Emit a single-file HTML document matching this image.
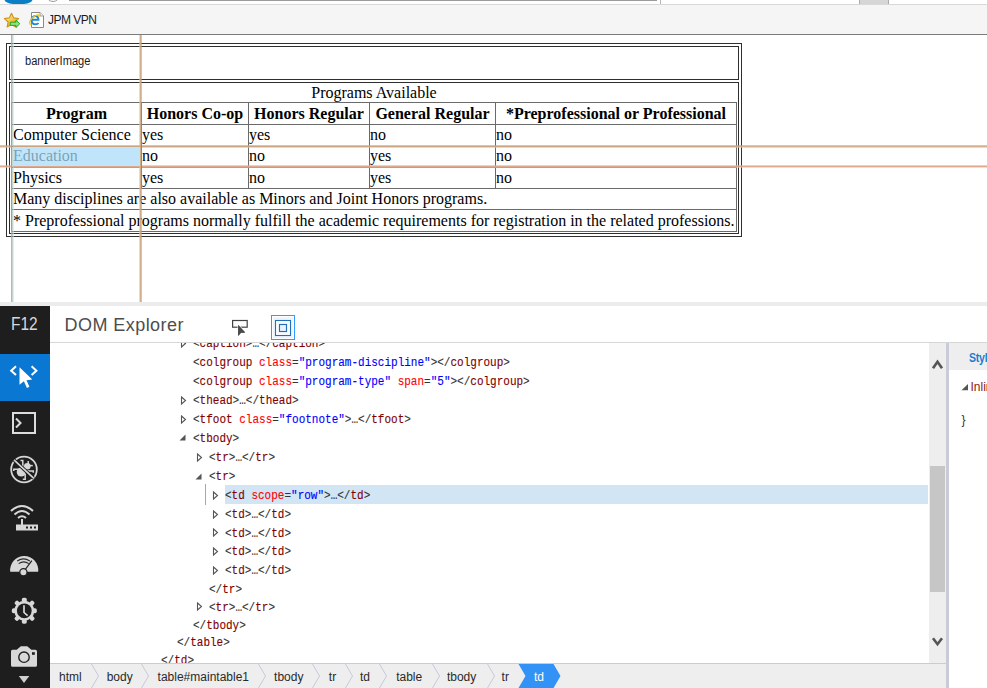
<!DOCTYPE html>
<html><head><meta charset="utf-8"><style>
html,body{margin:0;padding:0;}
body{width:987px;height:688px;position:relative;overflow:hidden;background:#fff;}
body>div,body>span,body>svg{position:absolute;}
.t{white-space:nowrap;}
</style></head><body>
<div style="left:0px;top:0px;width:987px;height:4px;background:#ffffff;"></div>
<div style="left:3.5px;top:-3px;width:29px;height:7px;border-radius:0 0 9px 9px / 0 0 6px 6px;background:#0a7fc6;"></div>
<div style="left:46px;top:-12px;width:12px;height:12px;border-radius:50%;border:1.5px solid #9a9a9a;background:#fff;"></div>
<div style="left:69px;top:0px;width:588px;height:1px;background:#9a9a9a;"></div>
<div style="left:660px;top:0px;width:1px;height:4px;background:#b8b8b8;"></div>
<div style="left:859px;top:0px;width:30px;height:4px;background:#d6d6d6;box-sizing:border-box;border-left:1px solid #aaa;border-right:1px solid #aaa;"></div>
<div style="left:0px;top:4px;width:987px;height:1px;background:#d8d8d8;"></div>
<div style="left:0px;top:5px;width:987px;height:29px;background:#f5f5f5;"></div>
<div style="left:0px;top:34px;width:987px;height:1px;background:#7c7c7c;"></div>
<svg style="left:3px;top:12px;" width="18" height="17" viewBox="0 0 18 17">
<defs><linearGradient id="sg" x1="0" y1="0" x2="0.6" y2="1"><stop offset="0" stop-color="#fff8d0"/><stop offset="0.45" stop-color="#fbd45a"/><stop offset="1" stop-color="#eb9512"/></linearGradient></defs>
<path d="M8.5 1.2 L10.6 5.8 L15.6 6.6 L11.9 10 L12.9 15 L8.5 12.6 L4.1 15 L5.1 10 L1.4 6.6 L6.4 5.8 Z" fill="url(#sg)" stroke="#c8951c" stroke-width="1.1" stroke-linejoin="round"/>
<path d="M7.3 10.2 H13 V8.2 L16.8 11.8 L13 15.4 V13.4 H7.3 Z" fill="#8fe37a" stroke="#24a824" stroke-width="1"/>
</svg>
<svg style="left:28px;top:11px;" width="18" height="18" viewBox="0 0 18 18">
<path d="M3.5 1.5 H12 L15.5 5 V16.5 H3.5 Z" fill="#fff" stroke="#8a8a8a" stroke-width="1"/>
<path d="M12 1.5 V5 H15.5" fill="#f0f0f0" stroke="#8a8a8a" stroke-width="0.8"/>
<path d="M3.9 8.7 H10.4 C10.4 6.2 9 4.9 7.3 4.9 C5.1 4.9 3.6 6.8 3.6 9.2 C3.6 11.8 5.4 13.3 7.5 13.3 C8.9 13.3 9.9 12.8 10.6 12.1" fill="none" stroke="#1f88d6" stroke-width="2"/>
<path d="M3.4 13.6 C1.2 13.4 0.9 11.2 3.2 8.2 C5.6 5.2 9.4 3.3 10.6 3.9 C11.3 4.3 11 5.4 10.6 6" fill="none" stroke="#f3c21c" stroke-width="1.3"/>
</svg>
<span class="t " style="left:48px;top:12.64px;font-family:'Liberation Sans', sans-serif;font-size:12px;line-height:14px;color:#1a1a1a;font-weight:normal;letter-spacing:-0.5px;">JPM VPN</span>
<div style="left:0px;top:35px;width:987px;height:267px;background:#ffffff;"></div>
<div style="left:6px;top:43px;width:736px;height:194px;box-sizing:border-box;border:1px solid #2e2e2e;"></div>
<div style="left:9px;top:46px;width:730px;height:34px;box-sizing:border-box;border:1px solid #2e2e2e;"></div>
<div style="left:9px;top:82px;width:730px;height:152px;box-sizing:border-box;border:1px solid #2e2e2e;"></div>
<span class="t " style="left:25.3px;top:53.84px;font-family:'Liberation Sans', sans-serif;font-size:12px;line-height:14px;color:#1a1a1a;font-weight:normal;transform:scaleX(0.925);transform-origin:0 0;">bannerImage</span>
<div style="left:11px;top:102px;width:726px;height:1px;background:#6a6a6a;"></div>
<div style="left:11px;top:124px;width:726px;height:1px;background:#6a6a6a;"></div>
<div style="left:11px;top:146px;width:726px;height:1px;background:#6a6a6a;"></div>
<div style="left:11px;top:167px;width:726px;height:1px;background:#6a6a6a;"></div>
<div style="left:11px;top:188px;width:726px;height:1px;background:#6a6a6a;"></div>
<div style="left:11px;top:209px;width:726px;height:1px;background:#6a6a6a;"></div>
<div style="left:11px;top:231px;width:726px;height:1px;background:#6a6a6a;"></div>
<div style="left:11px;top:102px;width:1px;height:130px;background:#6a6a6a;"></div>
<div style="left:736px;top:102px;width:1px;height:130px;background:#6a6a6a;"></div>
<div style="left:141px;top:102px;width:1px;height:87px;background:#6a6a6a;"></div>
<div style="left:248px;top:102px;width:1px;height:87px;background:#6a6a6a;"></div>
<div style="left:369px;top:102px;width:1px;height:87px;background:#6a6a6a;"></div>
<div style="left:495px;top:102px;width:1px;height:87px;background:#6a6a6a;"></div>
<span class="t" style="left:11px;width:726px;text-align:center;top:82.90px;font-family:'Liberation Serif', serif;font-size:16px;line-height:19px;color:#000;font-weight:normal;">Programs Available</span>
<span class="t" style="left:12px;width:129px;text-align:center;top:104.00px;font-family:'Liberation Serif', serif;font-size:16px;line-height:19px;color:#000;font-weight:bold;">Program</span>
<span class="t" style="left:142px;width:106px;text-align:center;top:104.00px;font-family:'Liberation Serif', serif;font-size:16px;line-height:19px;color:#000;font-weight:bold;">Honors Co-op</span>
<span class="t" style="left:249px;width:120px;text-align:center;top:104.00px;font-family:'Liberation Serif', serif;font-size:16px;line-height:19px;color:#000;font-weight:bold;">Honors Regular</span>
<span class="t" style="left:370px;width:125px;text-align:center;top:104.00px;font-family:'Liberation Serif', serif;font-size:16px;line-height:19px;color:#000;font-weight:bold;">General Regular</span>
<span class="t" style="left:496px;width:240px;text-align:center;top:104.00px;font-family:'Liberation Serif', serif;font-size:16px;line-height:19px;color:#000;font-weight:bold;">*Preprofessional or Professional</span>
<span class="t " style="left:13px;top:125.30px;font-family:'Liberation Serif', serif;font-size:16px;line-height:19px;color:#000;font-weight:normal;">Computer Science</span>
<span class="t " style="left:142px;top:125.30px;font-family:'Liberation Serif', serif;font-size:16px;line-height:19px;color:#000;font-weight:normal;">yes</span>
<span class="t " style="left:249px;top:125.30px;font-family:'Liberation Serif', serif;font-size:16px;line-height:19px;color:#000;font-weight:normal;">yes</span>
<span class="t " style="left:370px;top:125.30px;font-family:'Liberation Serif', serif;font-size:16px;line-height:19px;color:#000;font-weight:normal;">no</span>
<span class="t " style="left:496px;top:125.30px;font-family:'Liberation Serif', serif;font-size:16px;line-height:19px;color:#000;font-weight:normal;">no</span>
<span class="t " style="left:13px;top:145.80px;font-family:'Liberation Serif', serif;font-size:16px;line-height:19px;color:#000;font-weight:normal;">Education</span>
<span class="t " style="left:142px;top:145.80px;font-family:'Liberation Serif', serif;font-size:16px;line-height:19px;color:#000;font-weight:normal;">no</span>
<span class="t " style="left:249px;top:145.80px;font-family:'Liberation Serif', serif;font-size:16px;line-height:19px;color:#000;font-weight:normal;">no</span>
<span class="t " style="left:370px;top:145.80px;font-family:'Liberation Serif', serif;font-size:16px;line-height:19px;color:#000;font-weight:normal;">yes</span>
<span class="t " style="left:496px;top:145.80px;font-family:'Liberation Serif', serif;font-size:16px;line-height:19px;color:#000;font-weight:normal;">no</span>
<span class="t " style="left:13px;top:167.90px;font-family:'Liberation Serif', serif;font-size:16px;line-height:19px;color:#000;font-weight:normal;">Physics</span>
<span class="t " style="left:142px;top:167.90px;font-family:'Liberation Serif', serif;font-size:16px;line-height:19px;color:#000;font-weight:normal;">yes</span>
<span class="t " style="left:249px;top:167.90px;font-family:'Liberation Serif', serif;font-size:16px;line-height:19px;color:#000;font-weight:normal;">no</span>
<span class="t " style="left:370px;top:167.90px;font-family:'Liberation Serif', serif;font-size:16px;line-height:19px;color:#000;font-weight:normal;">yes</span>
<span class="t " style="left:496px;top:167.90px;font-family:'Liberation Serif', serif;font-size:16px;line-height:19px;color:#000;font-weight:normal;">no</span>
<span class="t " style="left:13px;top:189.30px;font-family:'Liberation Serif', serif;font-size:16px;line-height:19px;color:#000;font-weight:normal;">Many disciplines are also available as Minors and Joint Honors programs.</span>
<span class="t " style="left:13px;top:210.70px;font-family:'Liberation Serif', serif;font-size:16px;line-height:19px;color:#000;font-weight:normal;">* Preprofessional programs normally fulfill the academic requirements for registration in the related professions.</span>
<div style="left:13px;top:147px;width:127px;height:19px;background:rgba(168,219,248,0.725);"></div>
<div style="left:11px;top:35px;width:1px;height:267px;background:rgba(203,164,101,0.85);"></div>
<div style="left:12px;top:35px;width:1px;height:267px;background:rgba(157,187,175,0.6);"></div>
<div style="left:13px;top:35px;width:1px;height:112px;background:rgba(190,230,248,0.6);"></div>
<div style="left:13px;top:166px;width:1px;height:136px;background:rgba(190,230,248,0.6);"></div>
<div style="left:139px;top:35px;width:1px;height:112px;background:rgba(153,213,243,0.6);"></div>
<div style="left:139px;top:166px;width:1px;height:136px;background:rgba(153,213,243,0.6);"></div>
<div style="left:140px;top:35px;width:1px;height:267px;background:rgba(202,167,126,0.9);"></div>
<div style="left:141px;top:35px;width:1px;height:267px;background:rgba(192,160,82,0.6);"></div>
<div style="left:0px;top:145px;width:11px;height:1px;background:rgba(197,168,87,0.6);"></div>
<div style="left:0px;top:146px;width:11px;height:1px;background:rgba(210,170,129,0.92);"></div>
<div style="left:0px;top:147px;width:11px;height:1px;background:rgba(148,212,242,0.6);"></div>
<div style="left:0px;top:165px;width:11px;height:1px;background:rgba(132,207,243,0.6);"></div>
<div style="left:0px;top:166px;width:11px;height:1px;background:rgba(220,162,128,0.92);"></div>
<div style="left:0px;top:167px;width:11px;height:1px;background:rgba(218,208,155,0.6);"></div>
<div style="left:142px;top:145px;width:845px;height:1px;background:rgba(197,168,87,0.6);"></div>
<div style="left:142px;top:146px;width:845px;height:1px;background:rgba(210,170,129,0.92);"></div>
<div style="left:142px;top:147px;width:845px;height:1px;background:rgba(148,212,242,0.6);"></div>
<div style="left:142px;top:165px;width:845px;height:1px;background:rgba(132,207,243,0.6);"></div>
<div style="left:142px;top:166px;width:845px;height:1px;background:rgba(220,162,128,0.92);"></div>
<div style="left:142px;top:167px;width:845px;height:1px;background:rgba(218,208,155,0.6);"></div>
<div style="left:13px;top:145px;width:127px;height:1px;background:rgba(197,168,87,0.6);"></div>
<div style="left:13px;top:146px;width:127px;height:1px;background:rgba(210,170,129,0.92);"></div>
<div style="left:13px;top:166px;width:127px;height:1px;background:rgba(220,162,128,0.92);"></div>
<div style="left:13px;top:167px;width:127px;height:1px;background:rgba(218,208,155,0.6);"></div>
<div style="left:0px;top:302px;width:987px;height:4px;background:#ececec;"></div>
<div style="left:0px;top:306px;width:987px;height:382px;background:#ffffff;"></div>
<div style="left:0px;top:306px;width:50px;height:382px;background:#1e1e1e;"></div>
<span class="t " style="left:11.3px;top:313.06px;font-family:'Liberation Sans', sans-serif;font-size:18px;line-height:22px;color:#d8d8d8;font-weight:normal;transform:scaleX(0.86);transform-origin:0 0;">F12</span>
<div style="left:0px;top:354px;width:50px;height:47px;background:#0a78d2;"></div>
<span class="t " style="left:64.5px;top:313.56px;font-family:'Liberation Sans', sans-serif;font-size:18px;line-height:22px;color:#4d4d4d;font-weight:normal;letter-spacing:0.45px;">DOM Explorer</span>
<div style="left:50px;top:342px;width:937px;height:1px;background:#d6d6d6;"></div>
<div style="left:50px;top:343px;width:879px;height:320px;background:#ffffff;"></div>
<div style="left:225px;top:485px;width:703px;height:19px;background:#d1e5f5;"></div>
<div style="left:205px;top:484px;width:1px;height:21px;background:#a8a8a8;"></div>
<div style="left:50px;top:343px;width:879px;height:320px;overflow:hidden;">
<svg style="position:absolute;left:130px;top:-3.9px;" width="7" height="10" viewBox="0 0 7 10"><path d="M1.5 1 L5.5 4.5 L1.5 8 Z" fill="none" stroke="#555" stroke-width="1.1"/></svg>
<span class="t" style="position:absolute;left:143px;top:-5.60px;font-family:'Liberation Mono', monospace;font-size:12px;line-height:14px;transform:scaleX(0.9167);transform-origin:0 0;-webkit-text-stroke:0.12px currentColor;"><span style="color:#333333">&lt;</span><span style="color:#800000">caption</span><span style="color:#333333">&gt;</span><span style="color:#333333">…</span><span style="color:#333333">&lt;/</span><span style="color:#800000">caption</span><span style="color:#333333">&gt;</span></span>
<span class="t" style="position:absolute;left:143px;top:13.40px;font-family:'Liberation Mono', monospace;font-size:12px;line-height:14px;transform:scaleX(0.9167);transform-origin:0 0;-webkit-text-stroke:0.12px currentColor;"><span style="color:#333333">&lt;</span><span style="color:#800000">colgroup</span> <span style="color:#ff0000">class</span><span style="color:#333333">=</span><span style="color:#0000ff">"program-discipline"</span><span style="color:#333333">&gt;</span><span style="color:#333333">&lt;/</span><span style="color:#800000">colgroup</span><span style="color:#333333">&gt;</span></span>
<span class="t" style="position:absolute;left:143px;top:32.20px;font-family:'Liberation Mono', monospace;font-size:12px;line-height:14px;transform:scaleX(0.9167);transform-origin:0 0;-webkit-text-stroke:0.12px currentColor;"><span style="color:#333333">&lt;</span><span style="color:#800000">colgroup</span> <span style="color:#ff0000">class</span><span style="color:#333333">=</span><span style="color:#0000ff">"program-type"</span> <span style="color:#ff0000">span</span><span style="color:#333333">=</span><span style="color:#0000ff">"5"</span><span style="color:#333333">&gt;</span><span style="color:#333333">&lt;/</span><span style="color:#800000">colgroup</span><span style="color:#333333">&gt;</span></span>
<svg style="position:absolute;left:130px;top:52.7px;" width="7" height="10" viewBox="0 0 7 10"><path d="M1.5 1 L5.5 4.5 L1.5 8 Z" fill="none" stroke="#555" stroke-width="1.1"/></svg>
<span class="t" style="position:absolute;left:143px;top:51.00px;font-family:'Liberation Mono', monospace;font-size:12px;line-height:14px;transform:scaleX(0.9167);transform-origin:0 0;-webkit-text-stroke:0.12px currentColor;"><span style="color:#333333">&lt;</span><span style="color:#800000">thead</span><span style="color:#333333">&gt;</span><span style="color:#333333">…</span><span style="color:#333333">&lt;/</span><span style="color:#800000">thead</span><span style="color:#333333">&gt;</span></span>
<svg style="position:absolute;left:130px;top:71.5px;" width="7" height="10" viewBox="0 0 7 10"><path d="M1.5 1 L5.5 4.5 L1.5 8 Z" fill="none" stroke="#555" stroke-width="1.1"/></svg>
<span class="t" style="position:absolute;left:143px;top:69.80px;font-family:'Liberation Mono', monospace;font-size:12px;line-height:14px;transform:scaleX(0.9167);transform-origin:0 0;-webkit-text-stroke:0.12px currentColor;"><span style="color:#333333">&lt;</span><span style="color:#800000">tfoot</span> <span style="color:#ff0000">class</span><span style="color:#333333">=</span><span style="color:#0000ff">"footnote"</span><span style="color:#333333">&gt;</span><span style="color:#333333">…</span><span style="color:#333333">&lt;/</span><span style="color:#800000">tfoot</span><span style="color:#333333">&gt;</span></span>
<svg style="position:absolute;left:129px;top:91.3px;" width="7" height="7" viewBox="0 0 7 7"><path d="M0.5 6.5 L6.5 0.5 L6.5 6.5 Z" fill="#555"/></svg>
<span class="t" style="position:absolute;left:143px;top:88.60px;font-family:'Liberation Mono', monospace;font-size:12px;line-height:14px;transform:scaleX(0.9167);transform-origin:0 0;-webkit-text-stroke:0.12px currentColor;"><span style="color:#333333">&lt;</span><span style="color:#800000">tbody</span><span style="color:#333333">&gt;</span></span>
<svg style="position:absolute;left:146px;top:110.1px;" width="7" height="10" viewBox="0 0 7 10"><path d="M1.5 1 L5.5 4.5 L1.5 8 Z" fill="none" stroke="#555" stroke-width="1.1"/></svg>
<span class="t" style="position:absolute;left:159px;top:108.40px;font-family:'Liberation Mono', monospace;font-size:12px;line-height:14px;transform:scaleX(0.9167);transform-origin:0 0;-webkit-text-stroke:0.12px currentColor;"><span style="color:#333333">&lt;</span><span style="color:#800000">tr</span><span style="color:#333333">&gt;</span><span style="color:#333333">…</span><span style="color:#333333">&lt;/</span><span style="color:#800000">tr</span><span style="color:#333333">&gt;</span></span>
<svg style="position:absolute;left:145px;top:129.9px;" width="7" height="7" viewBox="0 0 7 7"><path d="M0.5 6.5 L6.5 0.5 L6.5 6.5 Z" fill="#555"/></svg>
<span class="t" style="position:absolute;left:159px;top:127.20px;font-family:'Liberation Mono', monospace;font-size:12px;line-height:14px;transform:scaleX(0.9167);transform-origin:0 0;-webkit-text-stroke:0.12px currentColor;"><span style="color:#333333">&lt;</span><span style="color:#800000">tr</span><span style="color:#333333">&gt;</span></span>
<svg style="position:absolute;left:162px;top:147.7px;" width="7" height="10" viewBox="0 0 7 10"><path d="M1.5 1 L5.5 4.5 L1.5 8 Z" fill="none" stroke="#555" stroke-width="1.1"/></svg>
<span class="t" style="position:absolute;left:175px;top:146.00px;font-family:'Liberation Mono', monospace;font-size:12px;line-height:14px;transform:scaleX(0.9167);transform-origin:0 0;-webkit-text-stroke:0.12px currentColor;"><span style="color:#333333">&lt;</span><span style="color:#800000">td</span> <span style="color:#ff0000">scope</span><span style="color:#333333">=</span><span style="color:#0000ff">"row"</span><span style="color:#333333">&gt;</span><span style="color:#333333">…</span><span style="color:#333333">&lt;/</span><span style="color:#800000">td</span><span style="color:#333333">&gt;</span></span>
<svg style="position:absolute;left:162px;top:166.5px;" width="7" height="10" viewBox="0 0 7 10"><path d="M1.5 1 L5.5 4.5 L1.5 8 Z" fill="none" stroke="#555" stroke-width="1.1"/></svg>
<span class="t" style="position:absolute;left:175px;top:164.80px;font-family:'Liberation Mono', monospace;font-size:12px;line-height:14px;transform:scaleX(0.9167);transform-origin:0 0;-webkit-text-stroke:0.12px currentColor;"><span style="color:#333333">&lt;</span><span style="color:#800000">td</span><span style="color:#333333">&gt;</span><span style="color:#333333">…</span><span style="color:#333333">&lt;/</span><span style="color:#800000">td</span><span style="color:#333333">&gt;</span></span>
<svg style="position:absolute;left:162px;top:185.3px;" width="7" height="10" viewBox="0 0 7 10"><path d="M1.5 1 L5.5 4.5 L1.5 8 Z" fill="none" stroke="#555" stroke-width="1.1"/></svg>
<span class="t" style="position:absolute;left:175px;top:183.60px;font-family:'Liberation Mono', monospace;font-size:12px;line-height:14px;transform:scaleX(0.9167);transform-origin:0 0;-webkit-text-stroke:0.12px currentColor;"><span style="color:#333333">&lt;</span><span style="color:#800000">td</span><span style="color:#333333">&gt;</span><span style="color:#333333">…</span><span style="color:#333333">&lt;/</span><span style="color:#800000">td</span><span style="color:#333333">&gt;</span></span>
<svg style="position:absolute;left:162px;top:204.1px;" width="7" height="10" viewBox="0 0 7 10"><path d="M1.5 1 L5.5 4.5 L1.5 8 Z" fill="none" stroke="#555" stroke-width="1.1"/></svg>
<span class="t" style="position:absolute;left:175px;top:202.40px;font-family:'Liberation Mono', monospace;font-size:12px;line-height:14px;transform:scaleX(0.9167);transform-origin:0 0;-webkit-text-stroke:0.12px currentColor;"><span style="color:#333333">&lt;</span><span style="color:#800000">td</span><span style="color:#333333">&gt;</span><span style="color:#333333">…</span><span style="color:#333333">&lt;/</span><span style="color:#800000">td</span><span style="color:#333333">&gt;</span></span>
<svg style="position:absolute;left:162px;top:223.0px;" width="7" height="10" viewBox="0 0 7 10"><path d="M1.5 1 L5.5 4.5 L1.5 8 Z" fill="none" stroke="#555" stroke-width="1.1"/></svg>
<span class="t" style="position:absolute;left:175px;top:221.30px;font-family:'Liberation Mono', monospace;font-size:12px;line-height:14px;transform:scaleX(0.9167);transform-origin:0 0;-webkit-text-stroke:0.12px currentColor;"><span style="color:#333333">&lt;</span><span style="color:#800000">td</span><span style="color:#333333">&gt;</span><span style="color:#333333">…</span><span style="color:#333333">&lt;/</span><span style="color:#800000">td</span><span style="color:#333333">&gt;</span></span>
<span class="t" style="position:absolute;left:159px;top:239.60px;font-family:'Liberation Mono', monospace;font-size:12px;line-height:14px;transform:scaleX(0.9167);transform-origin:0 0;-webkit-text-stroke:0.12px currentColor;"><span style="color:#333333">&lt;/</span><span style="color:#800000">tr</span><span style="color:#333333">&gt;</span></span>
<svg style="position:absolute;left:146px;top:259.3px;" width="7" height="10" viewBox="0 0 7 10"><path d="M1.5 1 L5.5 4.5 L1.5 8 Z" fill="none" stroke="#555" stroke-width="1.1"/></svg>
<span class="t" style="position:absolute;left:159px;top:257.60px;font-family:'Liberation Mono', monospace;font-size:12px;line-height:14px;transform:scaleX(0.9167);transform-origin:0 0;-webkit-text-stroke:0.12px currentColor;"><span style="color:#333333">&lt;</span><span style="color:#800000">tr</span><span style="color:#333333">&gt;</span><span style="color:#333333">…</span><span style="color:#333333">&lt;/</span><span style="color:#800000">tr</span><span style="color:#333333">&gt;</span></span>
<span class="t" style="position:absolute;left:143px;top:275.60px;font-family:'Liberation Mono', monospace;font-size:12px;line-height:14px;transform:scaleX(0.9167);transform-origin:0 0;-webkit-text-stroke:0.12px currentColor;"><span style="color:#333333">&lt;/</span><span style="color:#800000">tbody</span><span style="color:#333333">&gt;</span></span>
<span class="t" style="position:absolute;left:127px;top:293.40px;font-family:'Liberation Mono', monospace;font-size:12px;line-height:14px;transform:scaleX(0.9167);transform-origin:0 0;-webkit-text-stroke:0.12px currentColor;"><span style="color:#333333">&lt;/</span><span style="color:#800000">table</span><span style="color:#333333">&gt;</span></span>
<span class="t" style="position:absolute;left:111px;top:311.20px;font-family:'Liberation Mono', monospace;font-size:12px;line-height:14px;transform:scaleX(0.9167);transform-origin:0 0;-webkit-text-stroke:0.12px currentColor;"><span style="color:#333333">&lt;/</span><span style="color:#800000">td</span><span style="color:#333333">&gt;</span></span>
</div>
<svg style="left:228px;top:314px;" width="24" height="26" viewBox="0 0 24 26"><rect x="4.6" y="6.5" width="14.6" height="6.7" fill="none" stroke="#444" stroke-width="1.2"/><path d="M10.2 11 L10.2 21.9 L13 18.7 L17.2 18.5 Z" fill="#4a4a4a" stroke="#fff" stroke-width="1.3" paint-order="stroke"/><path d="M10.2 11 L10.2 21.9 L13 18.7 L17.2 18.5 Z" fill="#4a4a4a"/></svg>
<div style="left:271px;top:315px;width:24px;height:25px;box-sizing:border-box;border:1px solid #3399ff;background:#fff;"></div>
<svg style="left:271px;top:315px;" width="25" height="25" viewBox="0 0 25 25"><rect x="2" y="2" width="20" height="21" fill="#eef5fd"/><rect x="4.5" y="5.5" width="15" height="15" fill="#fff" stroke="#1f70b9" stroke-width="1.1"/><rect x="6.5" y="7.5" width="11" height="11" fill="#f1f6fc"/><rect x="8.5" y="9.5" width="7" height="7" fill="#eaf1f9" stroke="#1f70b9" stroke-width="1.1"/></svg>
<div style="left:929px;top:343px;width:17px;height:320px;background:#eeeeee;"></div>
<div style="left:930px;top:466px;width:15px;height:126px;background:#c6c6c6;"></div>
<svg style="left:929px;top:355px;" width="17" height="17" viewBox="0 0 17 17"><path d="M4 13.2 L8.5 6.8 L13 13.2" fill="none" stroke="#555" stroke-width="2.6"/></svg>
<svg style="left:929px;top:633px;" width="17" height="17" viewBox="0 0 17 17"><path d="M4 5.2 L8.5 11.2 L13 5.2" fill="none" stroke="#555" stroke-width="2.6"/></svg>
<div style="left:946px;top:343px;width:3px;height:345px;background:#c9cbd9;"></div>
<div style="left:949px;top:343px;width:38px;height:345px;background:#ffffff;"></div>
<div style="left:949px;top:343px;width:38px;height:27px;background:#eeeeee;"></div>
<span class="t " style="left:969px;top:351.14px;font-family:'Liberation Sans', sans-serif;font-size:12px;line-height:14px;color:#1f7ad0;font-weight:bold;letter-spacing:-0.3px;transform:scaleX(0.88);transform-origin:0 0;">Styles</span>
<svg style="left:961px;top:382.5px;" width="8" height="8" viewBox="0 0 8 8"><path d="M0.5 7.3 L7 1 L7 7.3 Z" fill="#555"/></svg>
<span class="t " style="left:970.5px;top:380.04px;font-family:'Liberation Sans', sans-serif;font-size:12px;line-height:14px;color:#8b1a1a;font-weight:normal;">Inline style</span>
<span class="t " style="left:961.5px;top:412.84px;font-family:'Liberation Sans', sans-serif;font-size:12px;line-height:14px;color:#333;font-weight:normal;">}</span>
<div style="left:50px;top:663px;width:896px;height:25px;background:#eeeeee;"></div>
<div style="left:50px;top:663px;width:896px;height:1px;background:#c9cbdc;"></div>
<span class="t " style="left:59.1px;top:670.04px;font-family:'Liberation Sans', sans-serif;font-size:12px;line-height:14px;color:#2a2a2a;font-weight:normal;">html</span>
<span class="t " style="left:106.7px;top:670.04px;font-family:'Liberation Sans', sans-serif;font-size:12px;line-height:14px;color:#2a2a2a;font-weight:normal;">body</span>
<span class="t " style="left:157.6px;top:670.04px;font-family:'Liberation Sans', sans-serif;font-size:12px;line-height:14px;color:#2a2a2a;font-weight:normal;">table#maintable1</span>
<span class="t " style="left:274.1px;top:670.04px;font-family:'Liberation Sans', sans-serif;font-size:12px;line-height:14px;color:#2a2a2a;font-weight:normal;">tbody</span>
<span class="t " style="left:328.8px;top:670.04px;font-family:'Liberation Sans', sans-serif;font-size:12px;line-height:14px;color:#2a2a2a;font-weight:normal;">tr</span>
<span class="t " style="left:360px;top:670.04px;font-family:'Liberation Sans', sans-serif;font-size:12px;line-height:14px;color:#2a2a2a;font-weight:normal;">td</span>
<span class="t " style="left:396.2px;top:670.04px;font-family:'Liberation Sans', sans-serif;font-size:12px;line-height:14px;color:#2a2a2a;font-weight:normal;">table</span>
<span class="t " style="left:446.9px;top:670.04px;font-family:'Liberation Sans', sans-serif;font-size:12px;line-height:14px;color:#2a2a2a;font-weight:normal;">tbody</span>
<span class="t " style="left:501.6px;top:670.04px;font-family:'Liberation Sans', sans-serif;font-size:12px;line-height:14px;color:#2a2a2a;font-weight:normal;">tr</span>
<svg style="left:90.5px;top:664px;" width="10" height="24" viewBox="0 0 10 24"><path d="M0.5 0 L7.5 12 L0.5 24" fill="none" stroke="#c6c9dc" stroke-width="1"/></svg>
<svg style="left:140.5px;top:664px;" width="10" height="24" viewBox="0 0 10 24"><path d="M0.5 0 L7.5 12 L0.5 24" fill="none" stroke="#c6c9dc" stroke-width="1"/></svg>
<svg style="left:257.5px;top:664px;" width="10" height="24" viewBox="0 0 10 24"><path d="M0.5 0 L7.5 12 L0.5 24" fill="none" stroke="#c6c9dc" stroke-width="1"/></svg>
<svg style="left:312px;top:664px;" width="10" height="24" viewBox="0 0 10 24"><path d="M0.5 0 L7.5 12 L0.5 24" fill="none" stroke="#c6c9dc" stroke-width="1"/></svg>
<svg style="left:345px;top:664px;" width="10" height="24" viewBox="0 0 10 24"><path d="M0.5 0 L7.5 12 L0.5 24" fill="none" stroke="#c6c9dc" stroke-width="1"/></svg>
<svg style="left:379px;top:664px;" width="10" height="24" viewBox="0 0 10 24"><path d="M0.5 0 L7.5 12 L0.5 24" fill="none" stroke="#c6c9dc" stroke-width="1"/></svg>
<svg style="left:431.5px;top:664px;" width="10" height="24" viewBox="0 0 10 24"><path d="M0.5 0 L7.5 12 L0.5 24" fill="none" stroke="#c6c9dc" stroke-width="1"/></svg>
<svg style="left:486.5px;top:664px;" width="10" height="24" viewBox="0 0 10 24"><path d="M0.5 0 L7.5 12 L0.5 24" fill="none" stroke="#c6c9dc" stroke-width="1"/></svg>
<svg style="left:518px;top:664px;" width="45" height="24" viewBox="0 0 45 24"><path d="M0.5 0 H35.5 L42.5 12 L35.5 24 H0.5 L7.5 12 Z" fill="#3392f5"/></svg>
<span class="t " style="left:534px;top:670.04px;font-family:'Liberation Sans', sans-serif;font-size:12px;line-height:14px;color:#ffffff;font-weight:normal;">td</span>
<svg style="left:0px;top:354px;" width="50" height="47" viewBox="0 0 50 47"><path d="M16 12.3 L11.2 16.7 L16 21.1" fill="none" stroke="#fff" stroke-width="2"/><path d="M31.6 12.3 L36.4 16.7 L31.6 21.1" fill="none" stroke="#fff" stroke-width="2"/><path d="M19.5 13.2 L19.5 30.7 L23.9 27.2 L26.9 33.9 L29.4 32.8 L26.5 26.2 L32.3 25.6 Z" fill="#fff"/></svg>
<svg style="left:0px;top:405px;" width="50" height="35" viewBox="0 0 50 35"><rect x="13" y="8" width="22" height="20" fill="none" stroke="#dcdcdc" stroke-width="2"/><path d="M16 13.5 L20.5 18 L16 22.5" fill="none" stroke="#dcdcdc" stroke-width="2"/></svg>
<svg style="left:0px;top:450px;" width="50" height="40" viewBox="0 0 50 40"><circle cx="24" cy="19.5" r="12.8" fill="none" stroke="#d6d6d6" stroke-width="1.8"/><g fill="#d6d6d6"><circle cx="21.3" cy="22" r="4.6"/><circle cx="27.3" cy="16.3" r="3.3"/></g><g fill="none" stroke="#d6d6d6" stroke-width="1.5"><path d="M20.5 10.6 H22.8 V18"/><path d="M13.8 21 V19.3 H19"/><path d="M25.2 24 V29.2 H22.8"/><path d="M26 20.9 H33.3 V22.8"/><path d="M28.2 11 V14"/><path d="M29.5 15.6 H32.8"/></g><path d="M14.2 10.2 L33.6 28.2" stroke="#1e1e1e" stroke-width="3.6"/><path d="M14.2 10.2 L33.6 28.2" stroke="#d6d6d6" stroke-width="1.6"/></svg>
<svg style="left:0px;top:501px;" width="50" height="35" viewBox="0 0 50 35"><path d="M11 10 Q22 0 33 10" fill="none" stroke="#d8d8d8" stroke-width="2"/><path d="M14.5 13.5 Q22 6.5 29.5 13.5" fill="none" stroke="#d8d8d8" stroke-width="2"/><path d="M18 17 Q22 13.5 26 17" fill="none" stroke="#d8d8d8" stroke-width="2"/><rect x="21" y="18" width="2" height="6" fill="#d8d8d8"/><rect x="16" y="23.5" width="22" height="6" fill="#d8d8d8"/><rect x="26" y="25.5" width="2" height="2" fill="#1e1e1e"/><rect x="30" y="25.5" width="2" height="2" fill="#1e1e1e"/><rect x="34" y="25.5" width="2" height="2" fill="#1e1e1e"/></svg>
<svg style="left:0px;top:550px;" width="50" height="30" viewBox="0 0 50 30"><path d="M10.2 21.8 A14.1 14.1 0 1 1 38.2 21.8 Z" fill="#d8d8d8"/><path d="M17.2 11 Q23.5 6.8 29.8 11" fill="none" stroke="#2a2a2a" stroke-width="1.1"/><path d="M18.6 13.6 Q23.8 10.2 28.8 13.6" fill="none" stroke="#2a2a2a" stroke-width="1.1"/><path d="M23.4 22 L31.8 10.6" stroke="#1e1e1e" stroke-width="1.2"/><circle cx="23.4" cy="22.3" r="3.6" fill="#d8d8d8" stroke="#1e1e1e" stroke-width="1.2"/></svg>
<svg style="left:0px;top:592px;" width="50" height="38" viewBox="0 0 50 38"><g fill="#d8d8d8"><circle cx="24.3" cy="18.8" r="10"/><rect x="21.8" y="5.8" width="5" height="4.5" rx="1.8"/><rect x="21.8" y="27.3" width="5" height="4.5" rx="1.8"/><rect x="11.8" y="16.3" width="4.5" height="5" rx="1.8"/><rect x="32.3" y="16.3" width="4.5" height="5" rx="1.8"/><rect x="14.7" y="9" width="5" height="4.5" rx="1.8" transform="rotate(45 17.2 11.3)"/><rect x="29.4" y="9" width="5" height="4.5" rx="1.8" transform="rotate(-45 31.9 11.3)"/><rect x="14.7" y="24" width="5" height="4.5" rx="1.8" transform="rotate(-45 17.2 26.3)"/><rect x="29.4" y="24" width="5" height="4.5" rx="1.8" transform="rotate(45 31.9 26.3)"/></g><circle cx="24.3" cy="18.8" r="7.4" fill="#1e1e1e"/><path d="M24 13.3 V20.5 L27.6 23.6" fill="none" stroke="#e0e0e0" stroke-width="1.6"/></svg>
<svg style="left:0px;top:640px;" width="50" height="48" viewBox="0 0 50 48"><path d="M12.5 9.8 H16.7 L20.9 6.3 H27.2 L31.4 9.8 H35.4 Q37 9.8 37 11.4 V25.2 Q37 26.8 35.4 26.8 H12.5 Q11 26.8 11 25.2 V11.4 Q11 9.8 12.5 9.8 Z" fill="#d8d8d8"/><circle cx="24" cy="17.2" r="5.2" fill="none" stroke="#1e1e1e" stroke-width="1.4"/><rect x="32" y="12.2" width="2.8" height="2.6" fill="#1e1e1e"/><path d="M18.8 35.9 H29.3 L24 42.9 Z" fill="#d0d0d0"/></svg>
</body></html>
